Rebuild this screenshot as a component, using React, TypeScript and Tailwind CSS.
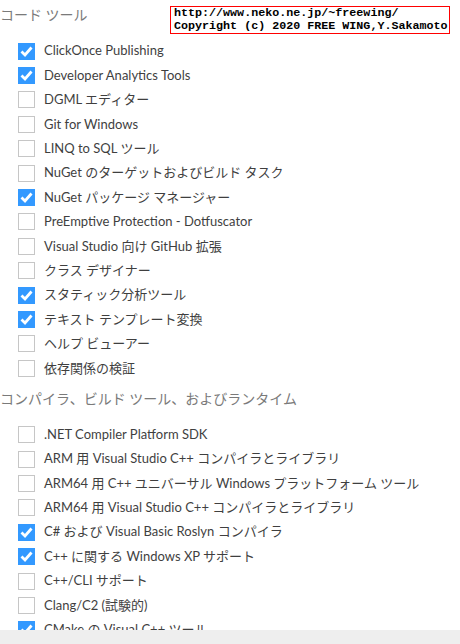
const sections = [
  {
    title: 'コード ツール',
    items: [
      { label: 'ClickOnce Publishing', checked: true },
      { label: 'Developer Analytics Tools', checked: true },
      { label: 'DGML エディター', checked: false },
      { label: 'Git for Windows', checked: false },
      { label: 'LINQ to SQL ツール', checked: false },
      { label: 'NuGet のターゲットおよびビルド タスク', checked: false },
      { label: 'NuGet パッケージ マネージャー', checked: true },
      { label: 'PreEmptive Protection - Dotfuscator', checked: false },
      { label: 'Visual Studio 向け GitHub 拡張', checked: false },
      { label: 'クラス デザイナー', checked: false },
      { label: 'スタティック分析ツール', checked: true },
      { label: 'テキスト テンプレート変換', checked: true },
      { label: 'ヘルプ ビューアー', checked: false },
      { label: '依存関係の検証', checked: false },
    ],
  },
  {
    title: 'コンパイラ、ビルド ツール、およびランタイム',
    items: [
      { label: '.NET Compiler Platform SDK', checked: false },
      { label: 'ARM 用 Visual Studio C++ コンパイラとライブラリ', checked: false },
      { label: 'ARM64 用 C++ ユニバーサル Windows プラットフォーム ツール', checked: false },
      { label: 'ARM64 用 Visual Studio C++ コンパイラとライブラリ', checked: false },
      { label: 'C# および Visual Basic Roslyn コンパイラ', checked: true },
      { label: 'C++ に関する Windows XP サポート', checked: true },
      { label: 'C++/CLI サポート', checked: false },
      { label: 'Clang/C2 (試験的)', checked: false },
      { label: 'CMake の Visual C++ ツール', checked: true },
    ],
  },
];

function CheckBox({ checked }: { checked: boolean }) {
  if (checked) {
    return (
      <div className="w-[17px] h-[17px] bg-[#3399ff] flex items-center justify-center shrink-0">
        <svg viewBox="0 0 17 17" className="w-[17px] h-[17px]">
          <polyline points="3.5,8.5 7,12 13.5,4.5" fill="none" stroke="#fff" strokeWidth="2.8" />
        </svg>
      </div>
    );
  }
  return <div className="w-[17px] h-[17px] border border-[#c6c6c6] bg-white shrink-0" />;
}

export default function App() {
  return (
    <div
      className="w-[460px] h-[644px] bg-white flex flex-col overflow-hidden relative"
      style={{ fontFamily: 'Lato, "Noto Sans CJK JP", sans-serif' }}
    >
      <div className="h-[630px] overflow-hidden">
        {sections.map((sec, i) => (
          <div key={sec.title} className={i === 0 ? 'pt-[5px] mb-[4px]' : 'pt-[5px]'}>
            <div className="h-[20px] leading-[20px] text-[14px] text-[#7a7a7a] whitespace-nowrap">
              {sec.title}
            </div>
            <div className={i === 0 ? 'mt-[14px]' : 'mt-[13px]'}>
              {sec.items.map((it) => (
                <div key={it.label} className="h-[24.4px] flex items-center pl-[18px] gap-[9px]">
                  <CheckBox checked={it.checked} />
                  <span className="text-[13px] text-[#3f3f3f] whitespace-nowrap">{it.label}</span>
                </div>
              ))}
            </div>
          </div>
        ))}
      </div>
      <div className="h-[14px] bg-[#eeeeee]" />

      {/* copyright overlay */}
      <div
        className="absolute left-[170px] top-[6px] w-[280px] h-[28px] border border-[#ff0000] bg-white px-[3px] text-[11.7px] leading-[13px] font-bold text-black whitespace-nowrap"
        style={{ fontFamily: '"Liberation Mono", monospace' }}
      >
        <div>http://www.neko.ne.jp/~freewing/</div>
        <div>Copyright (c) 2020 FREE WING,Y.Sakamoto</div>
      </div>
    </div>
  );
}
